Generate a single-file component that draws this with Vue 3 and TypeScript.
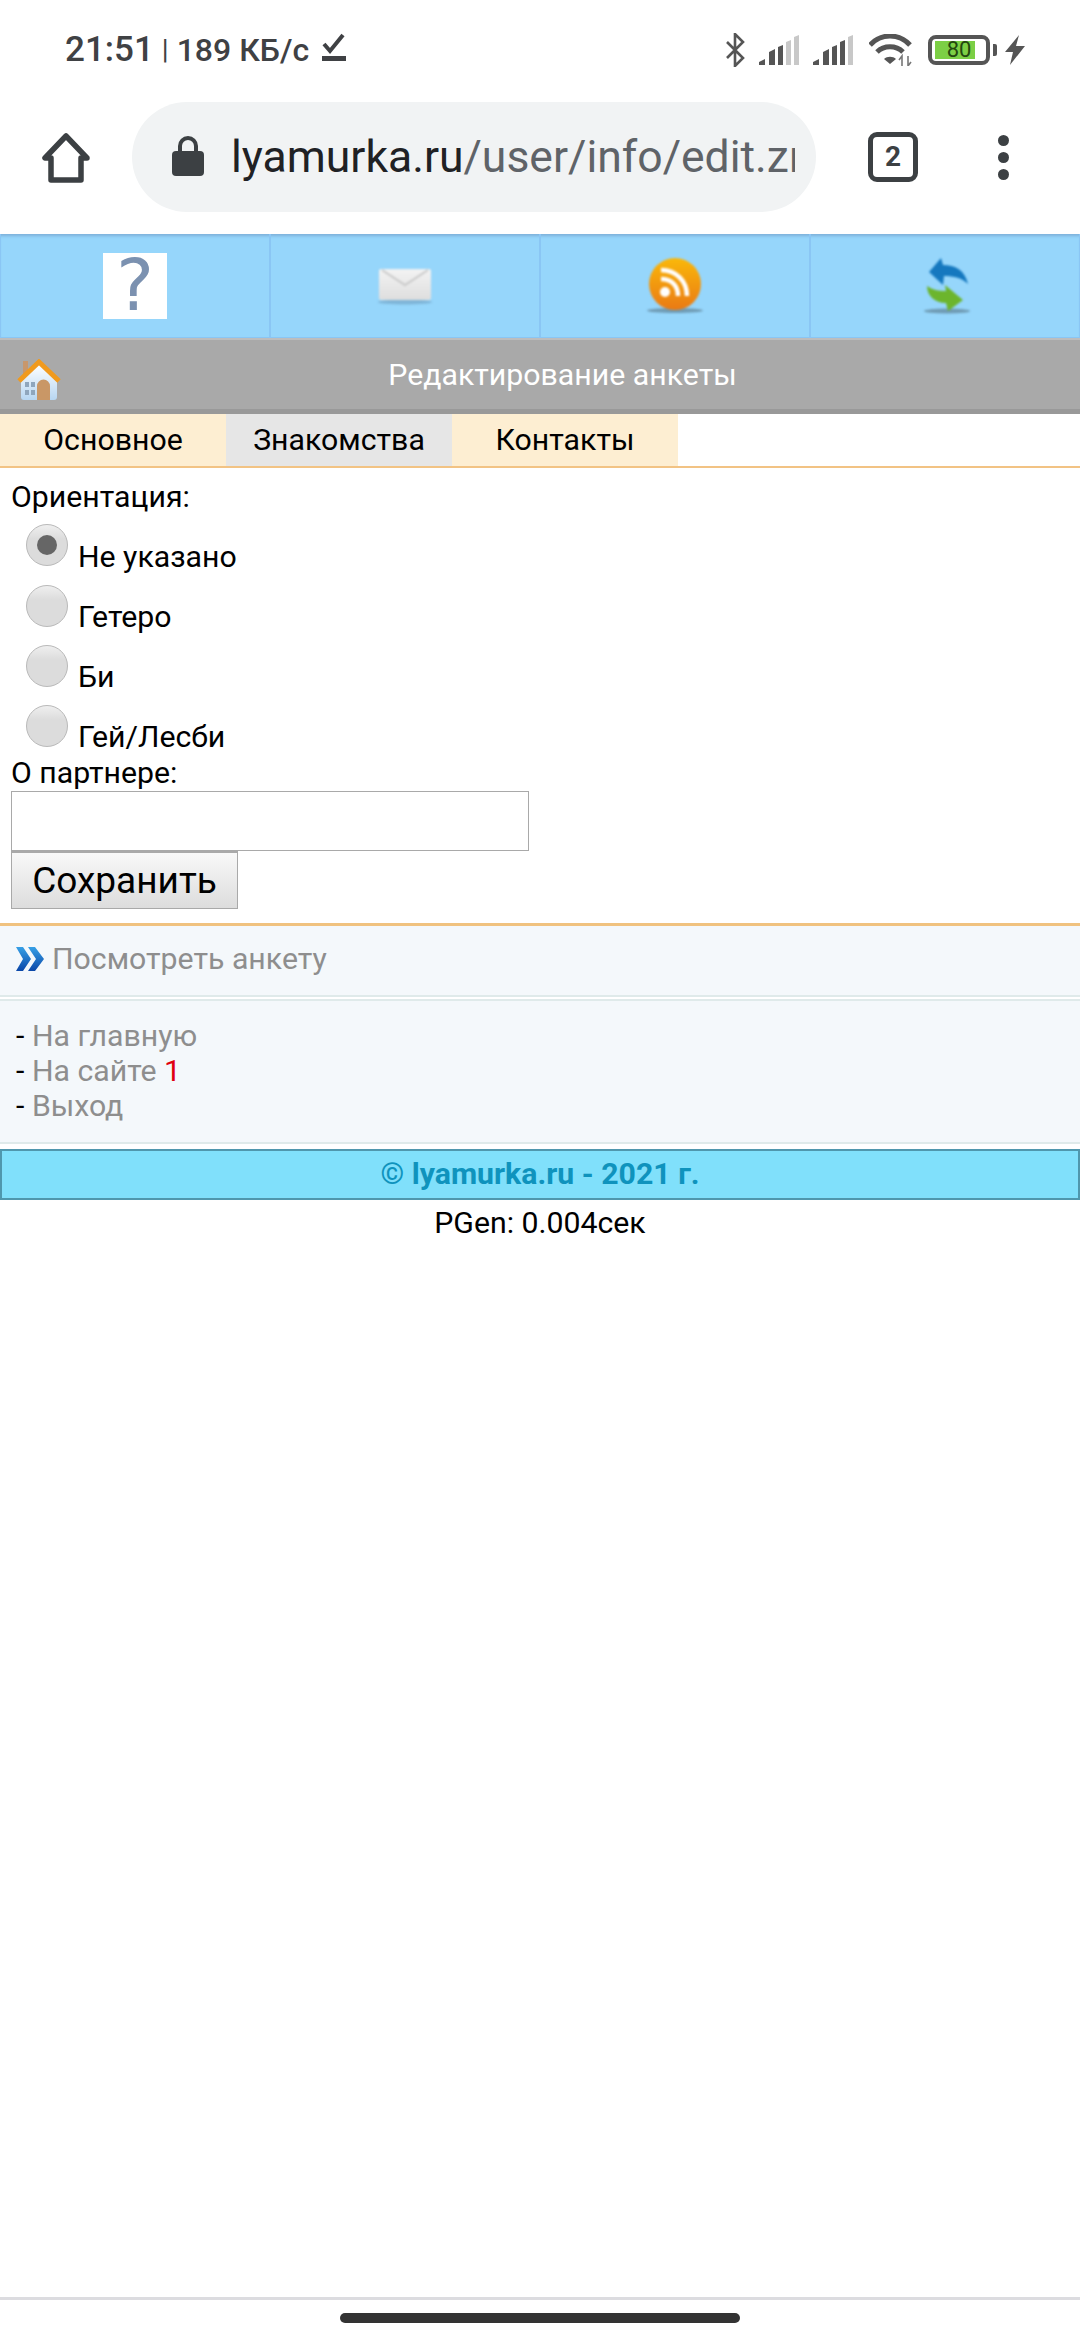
<template>
  <div class="page">
    <div class="status">
      <div class="status-left">
        <span class="time">21:51</span><span class="sep">|</span><span>189 КБ/с</span>
        <svg class="dl" width="26" height="30" viewBox="0 0 26 30">
          <path d="M3 11l6 7L22 2" fill="none" stroke="#3f4144" stroke-width="4" />
          <rect x="1" y="23" width="24" height="5" fill="#3f4144" />
        </svg>
      </div>
      <div class="status-right">
        <svg class="st-bt" width="20" height="34" viewBox="0 0 20 34">
          <path d="M2 9l16 16-8 8V1l8 8L2 25" fill="none" stroke="#555" stroke-width="2.6" />
        </svg>
        <svg class="st-sig1" width="40" height="30" viewBox="0 0 40 30">
          <path d="M0 30v-3l6-3v6zM10 30V17l6-3v16zM19 30V12l5-2v20z" fill="#555" />
          <path d="M27 30V7l5-2v25zM35 30V2l5-2v30z" fill="#c8c8c8" />
        </svg>
        <svg class="st-sig2" width="40" height="30" viewBox="0 0 40 30">
          <path d="M0 30v-3l6-3v6zM10 30V17l6-3v16zM19 30V12l5-2v20zM27 30V7l5-2v25z" fill="#555" />
          <path d="M35 30V2l5-2v30z" fill="#c8c8c8" />
        </svg>
        <svg class="st-wifi" width="44" height="32" viewBox="0 0 44 32">
          <path d="M1 11c11-12 29-12 40 0M8 18c7-7 19-7 26 0" fill="none" stroke="#555" stroke-width="5" />
          <path d="M21 30l-6-5c3-3 9-3 12 0z" fill="#555" />
          <path d="M33 32V22l-3 4M39 22v10l3-4" fill="none" stroke="#777" stroke-width="1.6" />
        </svg>
        <div class="battery">
          <div class="battery-fill"></div>
          <span class="battery-num">80</span>
        </div>
        <div class="battery-nub"></div>
        <svg class="st-bolt" width="20" height="30" viewBox="0 0 20 30">
          <path d="M14 0L0 17h8L5 30 20 11h-9z" fill="#555" />
        </svg>
      </div>
    </div>

    <div class="toolbar">
      <svg class="tb-home" width="48" height="50" viewBox="0 0 48 50">
        <path d="M24 3L3 25h6v22h30V25h6z" fill="none" stroke="#3c4043" stroke-width="5.5" stroke-linejoin="round" />
      </svg>
      <div class="omnibox">
        <svg class="lock" width="32" height="40" viewBox="0 0 32 40">
          <path d="M8 17V10a8 8 0 0 1 16 0v7" fill="none" stroke="#3c4043" stroke-width="4" />
          <rect x="0" y="15" width="32" height="25" rx="4" fill="#3c4043" />
        </svg>
        <div class="url"><span class="host">lyamurka.ru</span>/user/info/edit.zn</div>
      </div>
      <div class="tabs-count">2</div>
      <div class="more"><i></i><i></i><i></i></div>
    </div>

    <div class="iconbar">
      <a class="iconcell"><span class="help">?</span></a>
      <a class="iconcell">
        <svg width="54" height="38" viewBox="0 0 54 38">
          <defs>
            <linearGradient id="env" x1="0" y1="0" x2="0" y2="1">
              <stop offset="0" stop-color="#f3f3f3" />
              <stop offset="1" stop-color="#dedede" />
            </linearGradient>
          </defs>
          <ellipse cx="27" cy="35" rx="27" ry="2.5" fill="#7fb5d8" />
          <rect x="1" y="2" width="52" height="31" rx="2" fill="url(#env)" />
          <path d="M4 3l23 15L50 3" fill="none" stroke="#c9c9c9" stroke-width="2" />
        </svg>
      </a>
      <a class="iconcell">
        <svg width="56" height="56" viewBox="0 0 56 56">
          <defs>
            <linearGradient id="rss" x1="0" y1="0" x2="0" y2="1">
              <stop offset="0" stop-color="#fab80a" />
              <stop offset="1" stop-color="#ea7a14" />
            </linearGradient>
          </defs>
          <ellipse cx="28" cy="52.5" rx="28" ry="2.5" fill="#6f9bb4" />
          <circle cx="28" cy="26" r="26" fill="url(#rss)" />
          <circle cx="18" cy="34" r="5" fill="#fff" />
          <path d="M14 21c10 0 17 6 17 17M14 12c15 0 26 11 26 26" fill="none" stroke="#fff" stroke-width="4.5" />
        </svg>
      </a>
      <a class="iconcell">
        <svg class="arrows" width="48" height="56" viewBox="0 0 48 56">
          <ellipse cx="23" cy="53" rx="23" ry="2.5" fill="#6f9bb4" />
          <path d="M5 14L17 0l2 7c12 0 22 5 25 19-6-6-14-8-24-8l-1 9z" fill="#1578bf" />
          <path d="M3 28c6 4 11 5 19 5l-1-6 18 15-15 11-2-8C11 45 3 38 3 28z" fill="#6cb52d" />
        </svg>
      </a>
    </div>

    <div class="title">
      <svg class="title-home" width="46" height="42" viewBox="0 0 46 42">
        <defs>
          <linearGradient id="wall" x1="0" y1="0" x2="0" y2="1">
            <stop offset="0" stop-color="#fff" />
            <stop offset="1" stop-color="#b7d6f2" />
          </linearGradient>
        </defs>
        <rect x="7" y="2" width="5" height="14" fill="#c8976c" />
        <path d="M5 22L23 5l18 17v16a3 3 0 0 1-3 3H8a3 3 0 0 1-3-3z" fill="url(#wall)" />
        <path d="M21 41V27a6.500 6.500 0 0 1 13 0v14z" fill="#c99766" />
        <path d="M9 23h4v5H9zM15 23h4v5h-4zM9 31h4v5H9zM15 31h4v5h-4z" fill="#8fa6bd" />
        <path d="M3 22L23 3l20 19" fill="none" stroke="#f09a1e" stroke-width="5" />
      </svg>
      <span class="title-text">Редактирование анкеты</span>
    </div>

    <div class="tabs">
      <a v-for="t in tabs" :key="t.name" class="tab" :class="{ active: t.active }">{{ t.name }}</a>
    </div>

    <form class="form" @submit.prevent>
      <div class="label">Ориентация:</div>
      <label v-for="o in orientations" :key="o" class="option">
        <input v-model="orientation" class="radio" type="radio" :value="o" />
        <span class="option-text">{{ o }}</span>
      </label>
      <div class="label partner">О партнере:</div>
      <input class="field" type="text" />
      <button class="save" type="submit">Сохранить</button>
    </form>

    <div class="view-box">
      <svg width="28" height="24" viewBox="0 0 28 24">
        <defs>
          <linearGradient id="chev" x1="0" y1="0" x2="0" y2="1">
            <stop offset="0" stop-color="#37a0e6" />
            <stop offset="1" stop-color="#0a47a8" />
          </linearGradient>
        </defs>
        <path d="M0 0h7l8 12-8 12H0l7-12zM12 0h7l9 12-9 12h-7l8-12z" fill="url(#chev)" />
      </svg>
      <a class="link">Посмотреть анкету</a>
    </div>

    <div class="menu-box">
      <div v-for="m in menu" :key="m.name" class="menu-row">
        - <a class="link">{{ m.name }}</a
        ><span v-if="m.count" class="count">&nbsp;{{ m.count }}</span>
      </div>
    </div>

    <div class="copyright">© lyamurka.ru - 2021 г.</div>
    <div class="pgen">PGen: 0.004сек</div>

    <div class="navbar">
      <div class="home-pill"></div>
    </div>
  </div>
</template>

<script setup lang="ts">
import { ref } from 'vue';

interface ITab {
  name: string;
  active?: boolean;
}

interface IMenuItem {
  name: string;
  count?: number;
}

const tabs: ITab[] = [{ name: 'Основное' }, { name: 'Знакомства', active: true }, { name: 'Контакты' }];
const orientations = ['Не указано', 'Гетеро', 'Би', 'Гей/Лесби'];
const orientation = ref('Не указано');
const menu: IMenuItem[] = [{ name: 'На главную' }, { name: 'На сайте', count: 1 }, { name: 'Выход' }];
</script>

<style>
html,
body {
  margin: 0;
  background: #fff;
}
</style>

<style scoped>
.page {
  display: flex;
  flex-direction: column;
  width: 1080px;
  height: 2340px;
  overflow: hidden;
  background: #fff;
  font-family: Roboto, 'Noto Sans', sans-serif;
  font-size: 30.25px;
  line-height: 34px;
  color: #000;
}

.status {
  display: flex;
  justify-content: space-between;
  align-items: center;
  box-sizing: border-box;
  height: 102px;
  flex: none;
  padding: 0 55px 2px 65px;
  color: #3f4144;
}

.status-left {
  display: flex;
  align-items: center;
  font-size: 32px;
  font-weight: 500;
}

.time {
  font-size: 35px;
}

.sep {
  margin: 0 8px;
  font-weight: 400;
  font-size: 28px;
}

.dl {
  margin-left: 12px;
  margin-bottom: 4px;
}

.status-right {
  display: flex;
  align-items: center;
}

.st-sig1 {
  margin-left: 14px;
}

.st-sig2 {
  margin-left: 14px;
}

.st-wifi {
  margin-left: 16px;
}

.battery {
  position: relative;
  display: flex;
  align-items: center;
  justify-content: center;
  box-sizing: border-box;
  width: 62px;
  height: 30px;
  margin-left: 15px;
  border: 4px solid #555;
  border-radius: 8px;
}

.battery-fill {
  position: absolute;
  left: 3px;
  top: 2px;
  bottom: 2px;
  width: 40px;
  background: #7ccf45;
}

.battery-num {
  position: relative;
  font-size: 22px;
  line-height: 22px;
  color: #24470f;
}

.battery-nub {
  width: 4px;
  height: 12px;
  margin-left: 3px;
  background: #555;
  border-radius: 0 2px 2px 0;
}

.st-bolt {
  margin-left: 8px;
}

.toolbar {
  position: relative;
  display: flex;
  align-items: flex-start;
  box-sizing: border-box;
  height: 132px;
  flex: none;
}

.tb-home {
  margin: 31px 0 0 42px;
}

.omnibox {
  display: flex;
  align-items: center;
  box-sizing: border-box;
  width: 684px;
  height: 110px;
  margin-left: 42px;
  padding-left: 40px;
  border-radius: 55px;
  background: #f1f3f4;
}

.lock {
  flex: none;
  margin-bottom: 2px;
}

.url {
  width: 564px;
  margin-left: 27px;
  overflow: hidden;
  white-space: nowrap;
  font-size: 44.5px;
  line-height: 52px;
  color: #5f6368;
}

.host {
  color: #202124;
}

.tabs-count {
  display: flex;
  align-items: center;
  justify-content: center;
  box-sizing: border-box;
  width: 50px;
  height: 50px;
  margin: 30px 0 0 52px;
  border: 5px solid #3c4043;
  border-radius: 9px;
  font-size: 28px;
  font-weight: 700;
  color: #3c4043;
}

.more {
  display: flex;
  flex-direction: column;
  gap: 6px;
  margin: 33px 0 0 80px;
}

.more i {
  display: block;
  width: 11px;
  height: 11px;
  border-radius: 50%;
  background: #3c4043;
}

.iconbar {
  display: grid;
  grid-template-columns: repeat(4, 1fr);
  box-sizing: border-box;
  height: 104px;
  flex: none;
  background: #96d6fb;
  box-shadow: inset 0 3px 3px -1px #7eb1da;
}

.iconcell {
  display: flex;
  align-items: center;
  justify-content: center;
  border: 1px solid #8ac6f4;
  border-width: 0 1px 1px;
}

.iconcell svg {
  filter: blur(0.8px);
}

.arrows {
  margin-left: 6px;
}

.help {
  display: flex;
  align-items: center;
  justify-content: center;
  width: 64px;
  height: 66px;
  background: #fff;
  font-family: 'DejaVu Sans', sans-serif;
  font-size: 71px;
  line-height: 66px;
  color: #7b91b0;
}

.title {
  display: flex;
  align-items: center;
  position: relative;
  box-sizing: border-box;
  height: 76px;
  flex: none;
  padding-left: 16px;
  background: #a9a9a9;
  border-top: 2px solid #bdbdbd;
  border-bottom: 5px solid #999;
}

.title-home {
  margin-top: 11px;
  filter: blur(0.6px);
}

.title-text {
  position: absolute;
  left: 0;
  right: 0;
  padding-left: 45px;
  text-align: center;
  color: #fff;
}

.tabs {
  display: flex;
  box-sizing: border-box;
  height: 54px;
  flex: none;
  border-bottom: 2px solid #f2c384;
}

.tab {
  box-sizing: border-box;
  width: 226px;
  line-height: 52px;
  text-align: center;
  background: #fdeed2;
}

.tab.active {
  background: #e6e6e6;
}

.form {
  display: flex;
  flex-direction: column;
  align-items: flex-start;
  box-sizing: border-box;
  height: 458px;
  flex: none;
  padding: 12px 0 0 11px;
  border-bottom: 3px solid #f0c27f;
}

.option {
  display: flex;
  align-items: flex-start;
  height: 60px;
  padding-left: 15px;
}

.option:first-of-type {
  height: 61px;
}

.option-text {
  align-self: flex-end;
  margin-left: 10px;
  margin-bottom: 1px;
}

.radio {
  flex: none;
  position: relative;
  width: 42px;
  height: 42px;
  margin: 10px 0 0;
  appearance: none;
  border: 1px solid #b9b9b9;
  border-radius: 50%;
  background: linear-gradient(#efefef, #dcdcdc 35%, #dcdcdc);
}

.radio:checked::after {
  content: '';
  position: absolute;
  left: 10px;
  top: 10px;
  width: 20px;
  height: 20px;
  border-radius: 50%;
  background: #666;
}

.partner {
  margin-top: 1px;
}

.field {
  box-sizing: border-box;
  width: 518px;
  height: 60px;
  margin: 1px 0 0;
  border: 1px solid #a9a9a9;
  background: #fff;
}

.save {
  box-sizing: border-box;
  width: 227px;
  height: 58px;
  padding: 0;
  border: 1px solid #a9a9a9;
  border-top-width: 2px;
  background: linear-gradient(#f8f8f8, #dddddd);
  font-family: inherit;
  font-size: 37px;
  color: #000;
}

.view-box {
  display: flex;
  align-items: center;
  gap: 8px;
  box-sizing: border-box;
  height: 71px;
  flex: none;
  padding: 0 0 3px 16px;
  background: #f4f8fb;
  border-bottom: 2px solid #dfeaea;
}

.link {
  color: #8e8e8e;
}

.menu-box {
  box-sizing: border-box;
  height: 145px;
  flex: none;
  margin-top: 2px;
  padding: 18px 0 0 16px;
  background: #f4f8fb;
  border-top: 2px solid #dfeaea;
  border-bottom: 2px solid #dfeaea;
}

.menu-row {
  height: 35px;
}

.count {
  color: #e0000f;
}

.copyright {
  box-sizing: border-box;
  height: 51px;
  flex: none;
  margin-top: 5px;
  border: 2px solid #4f97ad;
  background: #80e0fb;
  font-weight: 700;
  line-height: 46px;
  text-align: center;
  color: #0f93bd;
}

.pgen {
  flex: none;
  margin-top: 6px;
  text-align: center;
}

.navbar {
  display: flex;
  justify-content: center;
  box-sizing: border-box;
  height: 43px;
  flex: none;
  margin-top: auto;
  padding-top: 13px;
  border-top: 3px solid #dcdce0;
}

.home-pill {
  width: 400px;
  height: 10px;
  border-radius: 5px;
  background: #333;
}
</style>
